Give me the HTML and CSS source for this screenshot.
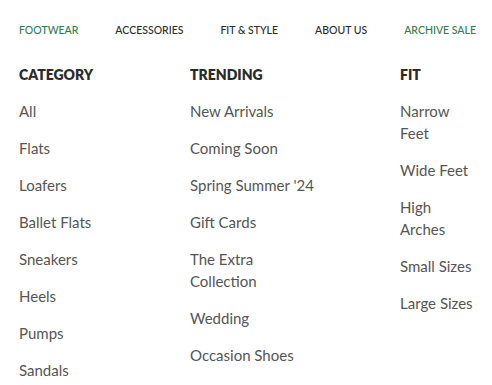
FILE: index.html
```html
<!DOCTYPE html>
<html lang="en">
  <head>
    <meta charset="UTF-8" />
    <meta name="viewport" content="width=device-width, initial-scale=1.0" />
    <title>Footwear menu</title>
    <link rel="stylesheet" href="styles.css">
  </head>
  <body>
    <nav class="top-nav">
      <a href="#" class="nav-link nav-link--green">FOOTWEAR</a>
      <a href="#" class="nav-link">ACCESSORIES</a>
      <a href="#" class="nav-link">FIT &amp; STYLE</a>
      <a href="#" class="nav-link">ABOUT US</a>
      <a href="#" class="nav-link nav-link--green">ARCHIVE SALE</a>
    </nav>
    <div class="mega-menu">
      <div class="menu-col menu-col--category">
        <h3 class="menu-title">CATEGORY</h3>
        <ul class="menu-list">
          <li><a href="#">All</a></li>
          <li><a href="#">Flats</a></li>
          <li><a href="#">Loafers</a></li>
          <li><a href="#">Ballet Flats</a></li>
          <li><a href="#">Sneakers</a></li>
          <li><a href="#">Heels</a></li>
          <li><a href="#">Pumps</a></li>
          <li><a href="#">Sandals</a></li>
        </ul>
      </div>
      <div class="menu-col menu-col--trending">
        <h3 class="menu-title">TRENDING</h3>
        <ul class="menu-list">
          <li><a href="#">New Arrivals</a></li>
          <li><a href="#">Coming Soon</a></li>
          <li><a href="#">Spring Summer '24</a></li>
          <li><a href="#">Gift Cards</a></li>
          <li><a href="#">The Extra Collection</a></li>
          <li><a href="#">Wedding</a></li>
          <li><a href="#">Occasion Shoes</a></li>
        </ul>
      </div>
      <div class="menu-col menu-col--fit">
        <h3 class="menu-title">FIT</h3>
        <ul class="menu-list">
          <li><a href="#">Narrow Feet</a></li>
          <li><a href="#">Wide Feet</a></li>
          <li><a href="#">High Arches</a></li>
          <li><a href="#">Small Sizes</a></li>
          <li><a href="#">Large Sizes</a></li>
        </ul>
      </div>
    </div>
  </body>
</html>
```

FILE: styles.css
```css
body {
  margin: 0;
  padding: 0 16px 0 19px;
  background: #fff;
  font-family: Lato, "Liberation Sans", sans-serif;
  color: #555;
  overflow: hidden;
}

a {
  color: inherit;
  text-decoration: none;
}

.top-nav {
  display: flex;
  justify-content: space-between;
  padding-top: 23px;
  height: 41px;
}

.nav-link {
  font-size: 10.5px;
  line-height: 14px;
  font-weight: 500;
  color: #2b2b2b;
}

.nav-link--green {
  color: #2e7d4f;
}

.mega-menu {
  display: flex;
}

.menu-col--category {
  width: 171px;
}

.menu-col--trending {
  width: 130px;
  margin-right: 80px;
}

.menu-col--fit {
  width: 76px;
}

.menu-title {
  margin: 0 0 14px;
  font-size: 14px;
  line-height: 22px;
  font-weight: 800;
  color: #2b2b2b;
}

.menu-list {
  list-style: none;
  margin: 0;
  padding: 0;
  display: flex;
  flex-direction: column;
  gap: 15px;
}

.menu-list li {
  font-size: 15px;
  line-height: 22px;
}
```
